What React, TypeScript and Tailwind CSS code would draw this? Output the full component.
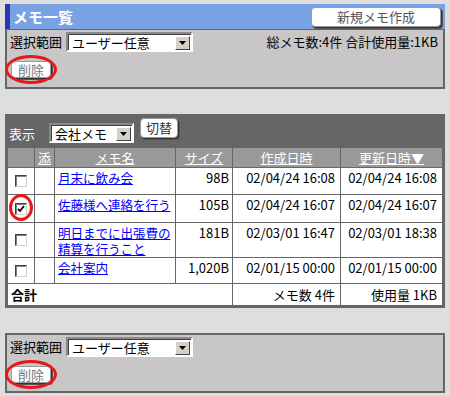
import React from "react";

interface Memo {
  title: string[];
  size: string;
  created: string;
  updated: string;
  checked?: boolean;
  rowClass: string;
}

const memos: Memo[] = [
  { title: ["月末に飲み会"], size: "98B", created: "02/04/24 16:08", updated: "02/04/24 16:08", rowClass: "h-[27px]" },
  { title: ["佐藤様へ連絡を行う"], size: "105B", created: "02/04/24 16:07", updated: "02/04/24 16:07", checked: true, rowClass: "h-[28px]" },
  { title: ["明日までに出張費の", "精算を行うこと"], size: "181B", created: "02/03/01 16:47", updated: "02/03/01 18:38", rowClass: "h-[34px]" },
  { title: ["会社案内"], size: "1,020B", created: "02/01/15 00:00", updated: "02/01/15 00:00", rowClass: "h-[26px]" },
];

const Select: React.FC<{ value: string; className: string }> = ({ value, className }) => (
  <div
    className={`flex h-[20px] items-stretch border-2 border-t-[#8a8a8a] border-l-[#8a8a8a] border-r-white border-b-white ${className}`}
  >
    <div className="flex flex-1 items-center justify-between bg-white border-t border-l border-t-[#404040] border-l-[#404040] pr-[1px]">
      <span className="pl-[3px] text-[13px] leading-[16px] text-black">{value}</span>
      <span className="flex h-[14px] w-[15px] items-center justify-center bg-[#d4d0c8] border border-t-white border-l-white border-r-[#404040] border-b-[#404040]">
        <svg width="7" height="4" viewBox="0 0 7 4">
          <path d="M0 0h7L3.5 4z" fill="#000" />
        </svg>
      </span>
    </div>
  </div>
);

const Button: React.FC<{ label: string; className: string; ring?: boolean }> = ({ label, className, ring }) => (
  <div className="relative">
    <button
      className={`flex items-center justify-center rounded-[4px] bg-white border border-[#9a9a9a] shadow-[1px_1px_0_#333,2px_2px_0_#555] text-[13px] leading-[16px] ${className}`}
    >
      {label}
    </button>
    {ring && (
      <div className="absolute -left-[6px] -top-[6px] h-[29px] w-[52px] rounded-[50%] border-[3px] border-[#e81818]" />
    )}
  </div>
);

const Checkbox: React.FC<{ checked?: boolean }> = ({ checked }) => (
  <div className="relative mx-auto h-[12px] w-[12px]">
    <div className="flex h-[12px] w-[12px] items-center justify-center bg-white border border-t-[#404040] border-l-[#404040] border-r-[#d4d0c8] border-b-[#d4d0c8] shadow-[inset_1px_1px_0_#808080]">
      {checked && (
        <svg width="8" height="8" viewBox="0 0 8 8">
          <path d="M1 4l2 2 4-5" stroke="#000" strokeWidth="1.8" fill="none" />
        </svg>
      )}
    </div>
    {checked && (
      <div className="absolute -left-[6px] -top-[9px] h-[27px] w-[24px] rounded-[50%] border-[3px] border-[#e81818]" />
    )}
  </div>
);

const DeletePanel: React.FC<{ summary?: boolean; className: string }> = ({ summary, className }) => (
  <div className={`h-[60px] bg-[#c8c6c6] border-2 border-[#666] pl-[3px] pt-[2px] ${className}`}>
    <div className="flex items-center">
      <span className="text-[13px] leading-[16px] text-black">選択範囲</span>
      <Select value="ユーザー任意" className="ml-[4px] w-[127px]" />
      {summary && (
        <span className="ml-auto pr-[5px] text-[13px] leading-[16px] text-black">
          総メモ数:4件 合計使用量:1KB
        </span>
      )}
    </div>
    <div className="mt-[9px] flex pl-[1px]">
      <Button label="削除" className="h-[17px] w-[40px] text-[#7a7a7a]" ring />
    </div>
  </div>
);

export default function App() {
  return (
    <div className="h-[396px] w-[450px] overflow-hidden bg-[#dedede] px-[5px] pt-[4px] font-['Noto_Sans_CJK_JP',sans-serif] text-black">
      <div className="flex h-[25px] items-center border-l-[5px] border-[#2a34b4] bg-[#79a2e2]">
        <span className="pl-[3px] text-[15px] font-bold leading-[18px] text-white">メモ一覧</span>
        <div className="ml-auto mr-[4px]">
          <Button label="新規メモ作成" className="h-[20px] w-[130px] text-[#555]" />
        </div>
      </div>
      <DeletePanel summary className="border-t" />

      <div className="mt-[25px] bg-[#666] border-2 border-[#666]">
        <div className="flex h-[31px] items-start">
          <span className="ml-[2px] mt-[10px] text-[13px] leading-[16px] text-white">表示</span>
          <Select value="会社メモ" className="ml-[14px] mt-[7px] w-[85px]" />
          <div className="ml-[6px] mt-[2px]">
            <Button label="切替" className="h-[20px] w-[38px] text-[#333]" />
          </div>
        </div>
        <table className="w-full table-fixed border-collapse text-[13px] leading-[16px]">
          <colgroup>
            <col className="w-[27px]" />
            <col className="w-[20px]" />
            <col className="w-[121px]" />
            <col className="w-[57px]" />
            <col className="w-[108px]" />
            <col />
          </colgroup>
          <thead>
            <tr className="h-[20px] bg-[#999] text-white">
              <th className="border border-[#666]" />
              {["添", "メモ名", "サイズ", "作成日時", "更新日時▼"].map((h) => (
                <th key={h} className="border border-[#666] text-center font-normal underline">
                  {h}
                </th>
              ))}
            </tr>
          </thead>
          <tbody className="bg-white">
            {memos.map((m) => (
              <tr key={m.created + m.size} className={m.rowClass}>
                <td className="border border-[#666] align-middle">
                  <Checkbox checked={m.checked} />
                </td>
                <td className="border border-[#666]" />
                <td className="border border-[#666] pl-[3px] pt-[2px] align-top">
                  {m.title.map((t) => (
                    <a
                      key={t}
                      href="#"
                      className="block whitespace-nowrap text-[12.6px] tracking-[-0.1px] text-[#0000ff] underline"
                    >
                      {t}
                    </a>
                  ))}
                </td>
                <td className="border border-[#666] pr-[3px] pt-[2px] text-right align-top">{m.size}</td>
                <td className="border border-[#666] pr-[5px] pt-[2px] text-right align-top">{m.created}</td>
                <td className="border border-[#666] pr-[5px] pt-[2px] text-right align-top">{m.updated}</td>
              </tr>
            ))}
            <tr className="h-[22px]">
              <td colSpan={4} className="border border-[#666] pl-[3px] font-bold">
                合計
              </td>
              <td className="border border-[#666] pr-[5px] text-right">メモ数 4件</td>
              <td className="border border-[#666] pr-[5px] text-right">使用量 1KB</td>
            </tr>
          </tbody>
        </table>
      </div>

      <DeletePanel className="mt-[25px]" />
    </div>
  );
}
